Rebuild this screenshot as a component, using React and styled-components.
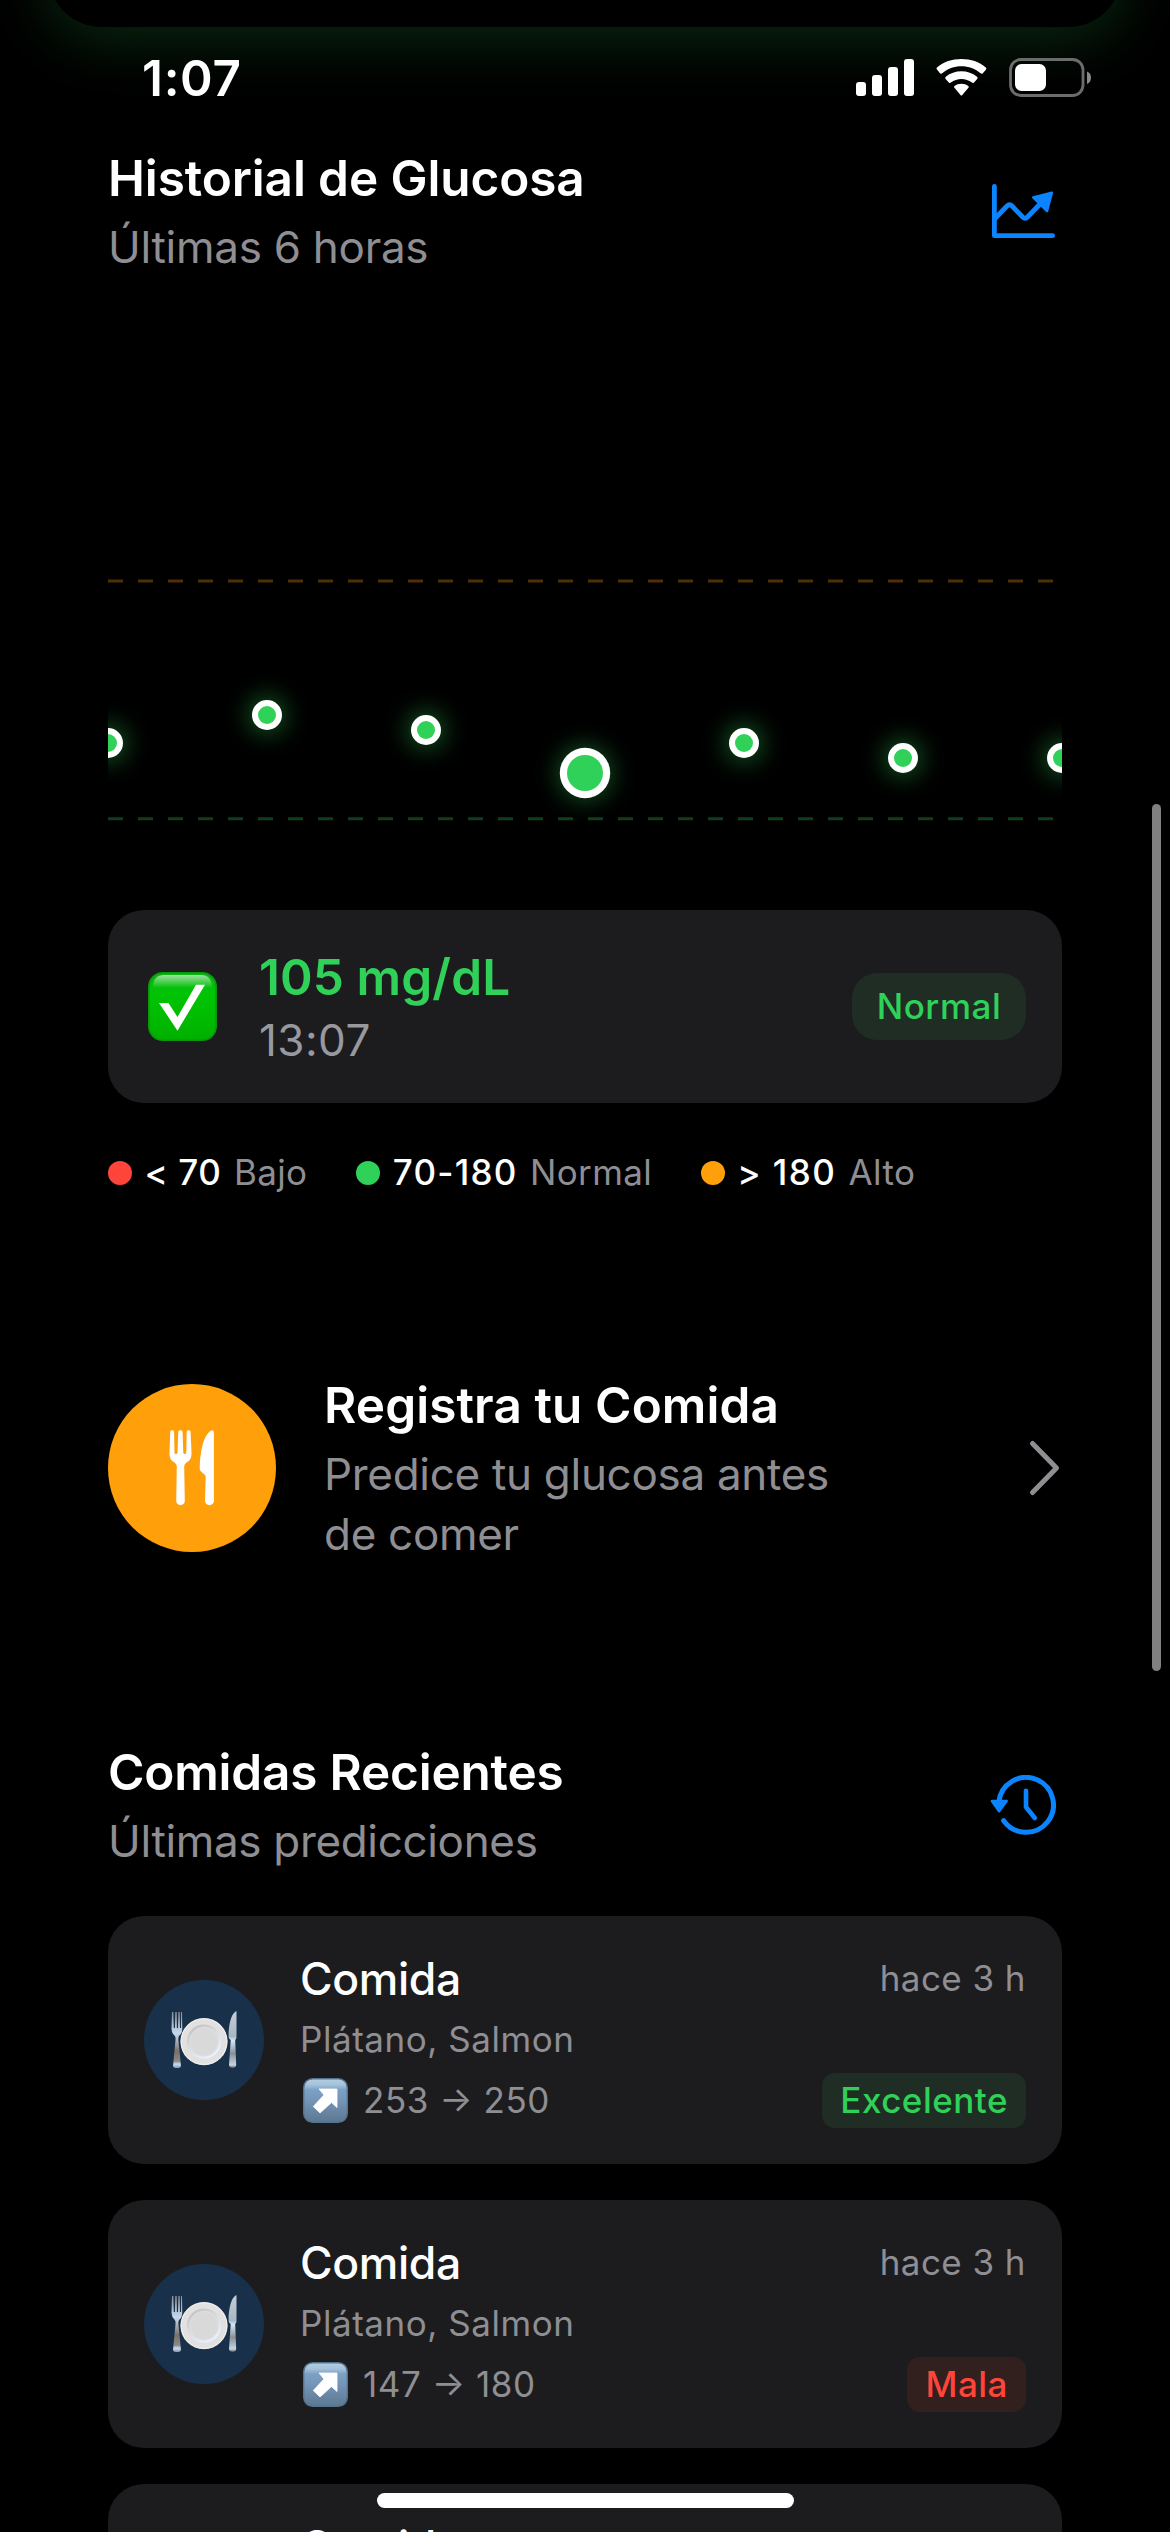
import React from "react";
import styled, { createGlobalStyle } from "styled-components";

const c = {
  label: "#ffffff",
  secondary: "#8e8e93",
  card: "#1c1c1e",
  green: "#30d158",
  orange: "#ff9f0a",
  red: "#ff453a",
  blue: "#0a84ff",
};

const GlobalStyle = createGlobalStyle`
  *, *::before, *::after { box-sizing: border-box; }
  body { margin: 0; background: #000; }
`;

const Page = styled.div`
  position: relative;
  width: 1170px;
  height: 2532px;
  overflow: hidden;
  background: #000;
  color: ${c.label};
  font-family: Inter, "Liberation Sans", sans-serif;
`;

const PreviousCard = styled.div`
  position: absolute;
  top: -200px;
  left: 48px;
  width: 1074px;
  height: 227px;
  border-radius: 54px;
  background: #000;
  box-shadow: 0 12px 60px rgba(48, 209, 88, 0.2);
`;

const StatusBar = styled.header`
  position: relative;
  display: flex;
  justify-content: space-between;
  align-items: flex-start;
  height: 145px;
  padding: 48px 78px 0 142px;
`;

const StatusIcons = styled.svg`
  display: block;
  width: 236px;
  height: 40px;
  margin-top: 9px;
`;

const Content = styled.main`
  display: flex;
  flex-direction: column;
  padding: 0 108px;
`;

const Section = styled.section`
  display: flex;
  flex-direction: column;
  margin-top: ${(p) => p.$top || 0}px;
`;

const SectionHeader = styled.div`
  display: flex;
  align-items: center;
  justify-content: space-between;
`;

const Stack = styled.div`
  display: flex;
  flex-direction: column;
  gap: ${(p) => p.$gap || 0}px;
  width: ${(p) => (p.$width ? `${p.$width}px` : "auto")};
`;

const Title = styled.div`
  font-size: 49.5px;
  font-weight: 600;
  line-height: ${(p) => p.$line || 66}px;
  letter-spacing: ${(p) => p.$ls || 0}px;
  color: ${(p) => p.$color || c.label};
  white-space: nowrap;
`;

const Subtitle = styled.div`
  font-size: 44px;
  line-height: 60px;
  letter-spacing: ${(p) => p.$ls ?? -0.33}px;
  color: ${(p) => p.$color || c.secondary};
`;

const Caption = styled.span`
  font-size: 35px;
  line-height: 48px;
  font-weight: ${(p) => p.$weight || 400};
  letter-spacing: ${(p) => p.$ls ?? 0.55}px;
  color: ${(p) => p.$color || c.secondary};
  white-space: nowrap;
`;

const Change = styled(Caption)`
  font-feature-settings: "case" 1;
`;

const Icon = styled.svg`
  display: block;
  flex: none;
  width: ${(p) => p.$w}px;
  height: ${(p) => p.$h}px;
  margin: ${(p) => p.$m || 0};
`;

const Chart = styled.svg`
  display: block;
  width: 954px;
  height: 573px;
  margin: 24px 0 36px;
`;

const ReadingCard = styled.div`
  display: flex;
  align-items: center;
  height: 193px;
  padding: 0 36px 0 40px;
  border-radius: 36px;
  background: ${c.card};
`;

const ReadingText = styled.div`
  display: flex;
  flex-direction: column;
  flex: 1;
  margin-left: 42px;
`;

const StatusPill = styled.div`
  display: flex;
  align-items: center;
  justify-content: center;
  width: 174px;
  height: 67px;
  padding-bottom: 2px;
  border-radius: 25px;
  background: #1f2d25;
`;

const Legend = styled.div`
  display: flex;
  gap: 49px;
  margin-top: 45px;
`;

const LegendItem = styled.div`
  display: flex;
  align-items: center;
  gap: 12.4px;
`;

const Dot = styled.span`
  width: 24px;
  height: 24px;
  margin-top: 2px;
  border-radius: 50%;
  background: ${(p) => p.$color};
`;

const ActionRow = styled.section`
  display: flex;
  align-items: center;
  gap: 48px;
  height: 192px;
  margin-top: 176px;
`;

const ActionIcon = styled.div`
  display: flex;
  align-items: center;
  justify-content: center;
  width: 168px;
  height: 168px;
  border-radius: 50%;
  background: ${c.orange};
`;

const MealList = styled.div`
  display: flex;
  flex-direction: column;
  gap: 36px;
  margin-top: 45px;
`;

const MealCard = styled.article`
  display: flex;
  align-items: center;
  gap: 36px;
  height: 248px;
  padding: 0 36px;
  border-radius: 36px;
  background: ${c.card};
`;

const MealAvatar = styled.div`
  width: 120px;
  height: 120px;
  border-radius: 50%;
  background: #18304a;
`;

const MealBody = styled.div`
  display: flex;
  flex-direction: column;
  flex: 1;
  height: 182px;
`;

const MealRow = styled.div`
  display: flex;
  align-items: center;
  justify-content: space-between;
  height: ${(p) => p.$h}px;
  margin-top: ${(p) => p.$top || 0}px;
`;

const MealName = styled.div`
  font-size: 44.5px;
  font-weight: 500;
  line-height: 60px;
  letter-spacing: -0.35px;
`;

const MealTime = styled(Caption)`
  padding-bottom: 2px;
`;

const Trend = styled.div`
  display: flex;
  align-items: center;
  gap: 15px;
  padding: 0 0 1px 3px;
`;

const RatingBadge = styled.div`
  display: flex;
  align-items: center;
  height: 55px;
  padding: 0 18px 1px;
  border-radius: 13px;
  background: ${(p) => p.$bg};
`;

const ScrollIndicator = styled.div`
  position: absolute;
  top: 804px;
  left: 1152px;
  width: 9px;
  height: 867px;
  border-radius: 5px;
  background: #808080;
`;

const HomeIndicator = styled.div`
  position: absolute;
  left: 377px;
  top: 2493px;
  width: 417px;
  height: 15px;
  border-radius: 8px;
  background: #fff;
`;

const readings = [
  { x: 0, y: 442 },
  { x: 159, y: 414 },
  { x: 318, y: 429 },
  { x: 477, y: 472, selected: true },
  { x: 636, y: 442 },
  { x: 795, y: 457 },
  { x: 954, y: 457 },
];

const ranges = [
  { color: c.red, value: "< 70", name: "Bajo", ls: 0.6 },
  { color: c.green, value: "70-180", name: "Normal", ls: 1.25 },
  { color: c.orange, value: "> 180", name: "Alto", ls: 1.4 },
];

const tones = {
  good: { bg: "#1f2d25", color: c.green },
  bad: { bg: "#32201f", color: c.red },
};

const meals = [
  { change: "253 → 250", rating: "Excelente", tone: "good" },
  { change: "147 → 180", rating: "Mala", tone: "bad" },
  { change: "147 → 180", rating: "Mala", tone: "bad" },
];

function StatusGlyphs() {
  return (
    <StatusIcons viewBox="0 0 236 40">
      <g fill="#fff">
        <rect x="0" y="25" width="10" height="14" rx="3" />
        <rect x="16" y="18" width="10" height="21" rx="3" />
        <rect x="32" y="10" width="10" height="29" rx="3" />
        <rect x="48" y="2" width="10" height="37" rx="3" />
        <path d="M81 12.6 Q79.8 11.6 81 10.5 C87.500 4.800 96 2 105.400 2 C114.800 2 123.300 4.800 129.800 10.500 Q131 11.600 129.900 12.700 L126.800 16.200 Q125.800 17.300 124.600 16.300 C119.300 11.700 112.600 9.300 105.400 9.300 C98.200 9.300 91.500 11.700 86.200 16.300 Q85 17.300 84 16.200 Z" />
        <path d="M89.600 21.900 Q88.600 20.800 89.800 19.800 C94.200 16.200 99.500 14.300 105.400 14.300 C111.300 14.300 116.600 16.200 121 19.800 Q122.200 20.800 121.200 21.900 L118 25.500 Q117.100 26.500 115.900 25.600 C112.800 23.200 109.300 22 105.400 22 C101.500 22 98 23.200 94.900 25.600 Q93.700 26.500 92.800 25.500 Z" />
        <path d="M98.400 30.800 Q97.400 29.800 98.500 28.900 C100.500 27.500 102.800 26.800 105.400 26.800 C108 26.800 110.300 27.500 112.300 28.900 Q113.400 29.800 112.400 30.800 L106.300 38 Q105.400 39 104.500 38 Z" />
        <rect x="159" y="7" width="31" height="27" rx="6.500" />
      </g>
      <rect x="154.500" y="2.500" width="72.500" height="36" rx="10.500" fill="none" stroke="#6c6c6c" strokeWidth="2.800" />
      <path d="M231 14.500 C233.500 15.500 235 17.700 235 20.700 C235 23.700 233.500 26 231 27 Z" fill="#8a8a8a" />
    </StatusIcons>
  );
}

function TrendChartIcon() {
  return (
    <Icon $w={66} $h={58} $m="0 5px 0 0" viewBox="0 0 66 58" fill="none" stroke={c.blue} strokeWidth="4.800" strokeLinecap="round" strokeLinejoin="round">
      <path d="M3.400 4.400 V53.700 H61.600" />
      <path d="M4.500 36 L16 24 Q18.600 21.500 21 24 L31.600 35 Q34 37.500 36.500 35 L51 20" />
      <path d="M60.800 10.800 L42.200 15.400 L56 29.200 Z" fill={c.blue} strokeWidth="2.500" />
    </Icon>
  );
}

function HistoryIcon() {
  return (
    <Icon $w={66} $h={60} $m="0 6px 0 0" viewBox="0 0 66 60" fill="none" stroke={c.blue} strokeWidth="5" strokeLinecap="round" strokeLinejoin="round">
      <path d="M8.800 27 A27.400 27.400 0 1 1 13.600 45.600" strokeLinecap="round" />
      <path d="M36 15.800 V32 L44.800 43" strokeWidth="4.600" />
      <path d="M1.900 26 H16.700 L9.100 36.300 Z" fill={c.blue} strokeWidth="2.500" />
    </Icon>
  );
}

function ForkKnifeIcon() {
  return (
    <Icon $w={46} $h={76} viewBox="0 0 46 76" fill="#fff">
      <path d="M1.200 2.200 C1.300 -0.300 5.100 -0.300 5.100 2.200 L5.500 22.500 Q5.600 24 7 24 Q8.400 24 8.500 22.500 L9.200 2.200 C9.300 -0.300 13.500 -0.300 13.600 2.200 L14.300 22.500 Q14.400 24 15.800 24 Q17.200 24 17.300 22.500 L17.700 2.200 C17.700 -0.300 21.500 -0.300 21.600 2.200 L22.500 22 C22.800 28 21 30.500 17.500 32.600 Q15.200 34 15.200 36.500 L15.800 71 C15.800 76.500 7.200 76.500 7.200 71 L7.800 36.500 Q7.800 34 5.500 32.600 C2 30.500 0.200 28 0.500 22 Z" />
      <path d="M41.500 0.800 Q44.800 -1.200 44.900 3 L44.900 71 C44.900 76.500 36 76.500 36 71 L36.700 47 Q36.700 45.500 35.500 44.500 L32 41.500 Q30.600 40.300 30.700 38 C31 21 34.500 6 41.500 0.800 Z" />
    </Icon>
  );
}

function CheckEmoji() {
  return (
    <Icon $w={69} $h={69} viewBox="0 0 69 69">
      <defs>
        <linearGradient id="checkFill" x1="0" y1="0" x2="0" y2="1">
          <stop offset="0" stopColor="#0bb512" />
          <stop offset="0.300" stopColor="#00c405" />
          <stop offset="0.600" stopColor="#00bd00" />
          <stop offset="1" stopColor="#00b000" />
        </linearGradient>
        <linearGradient id="checkShine" x1="0" y1="0" x2="0" y2="1">
          <stop offset="0" stopColor="#fff" stopOpacity="0.600" />
          <stop offset="1" stopColor="#fff" stopOpacity="0" />
        </linearGradient>
      </defs>
      <rect x="0.800" y="0.800" width="67.400" height="67.400" rx="14" fill="url(#checkFill)" stroke="#0a960d" strokeWidth="1.600" />
      <path d="M4.500 16 Q5.500 3 16 3 H53 Q63.500 3 64.500 16 Z" fill="url(#checkShine)" />
      <path d="M11 31 H20.500 L29.500 45 L48 12.700 H57 L29.500 58.700 Z" fill="#fff" />
    </Icon>
  );
}

function PlateEmoji() {
  return (
    <Icon $w={120} $h={120} viewBox="0 0 120 120">
      <defs>
        <linearGradient id="metal" x1="0" y1="0" x2="0" y2="1">
          <stop offset="0" stopColor="#8d8f95" />
          <stop offset="0.380" stopColor="#c3d9ef" />
          <stop offset="0.480" stopColor="#b6bec8" />
          <stop offset="0.700" stopColor="#77706c" />
          <stop offset="0.880" stopColor="#8e8986" />
          <stop offset="0.930" stopColor="#c9ddf5" />
          <stop offset="1" stopColor="#8d99a8" />
        </linearGradient>
        <linearGradient id="blade" x1="0" y1="0" x2="0" y2="1">
          <stop offset="0" stopColor="#c4ced8" />
          <stop offset="0.450" stopColor="#a9b7c3" />
          <stop offset="0.520" stopColor="#d3e7f8" />
          <stop offset="0.750" stopColor="#8b9096" />
          <stop offset="0.950" stopColor="#c3d4e4" />
          <stop offset="1" stopColor="#7c7571" />
        </linearGradient>
        <linearGradient id="well" x1="0" y1="0" x2="0.600" y2="1">
          <stop offset="0" stopColor="#bdbdbf" />
          <stop offset="0.500" stopColor="#d8dadd" />
          <stop offset="1" stopColor="#e6f0fd" />
        </linearGradient>
      </defs>
      <path d="M28 32 H29.300 L29.800 48 H30.900 L31.300 32 H32.700 L32.900 48 H34 L34.400 32 H35.700 L36 48 H37 L37 32 H38 L38.300 49 Q38 54 35 56 Q34.200 57 34.400 60 L37 86 Q36.600 88 33 88 Q29.300 88 29 86 L31.500 60 Q31.800 57 30.800 56 Q27.600 53 27.500 49 Z" fill="url(#metal)" />
      <path d="M92.500 31 Q86 34 84.600 52 V57 Q84.800 59 86.700 60 L85 85 Q85.300 87.700 88.700 87.700 Q92 87.700 92.200 85 L91.200 60 Q92.500 59 92.500 57 Z" fill="url(#blade)" />
      <circle cx="60" cy="61.600" r="23.600" fill="#e2e1e0" />
      <circle cx="60" cy="61.600" r="22.800" fill="none" stroke="#f1f1f1" strokeWidth="1" />
      <circle cx="60" cy="61.600" r="16" fill="#dcdcdc" stroke="url(#well)" strokeWidth="2.400" />
      <circle cx="60" cy="61.600" r="13" fill="#d9d9d9" />
    </Icon>
  );
}

function ArrowEmoji() {
  return (
    <Icon $w={45} $h={45} viewBox="0 0 45 45">
      <defs>
        <linearGradient id="arrowFill" x1="0" y1="0" x2="0" y2="1">
          <stop offset="0" stopColor="#b4cfe4" />
          <stop offset="0.140" stopColor="#a5c2da" />
          <stop offset="0.260" stopColor="#7ba0c6" />
          <stop offset="0.500" stopColor="#7595b8" />
          <stop offset="1" stopColor="#5c7890" />
        </linearGradient>
      </defs>
      <rect x="0.700" y="0.700" width="43.600" height="43.600" rx="9" fill="url(#arrowFill)" stroke="#55748f" strokeWidth="1.400" />
      <path d="M16 11 H34 V29.500 L28.500 24.500 L17 35 L10.300 28.500 L21 17 Z" fill="#fff" stroke="#fff" strokeWidth="0.800" strokeLinejoin="round" />
    </Icon>
  );
}

function GlucoseChart() {
  return (
    <Chart viewBox="0 0 954 573">
      <defs>
        <filter id="glow" x="-200%" y="-200%" width="500%" height="500%">
          <feGaussianBlur stdDeviation="12" />
        </filter>
      </defs>
      <path d="M0 280 H954" stroke="#4d3003" strokeWidth="3" strokeDasharray="15 15" />
      <path d="M0 517.700 H954" stroke="#0e3f1a" strokeWidth="3" strokeDasharray="15 15" />
      {readings.map((p) => (
        <g key={p.x}>
          <circle cx={p.x} cy={p.y} r={p.selected ? 27 : 19} fill={c.green} opacity="0.400" filter="url(#glow)" />
          <circle cx={p.x} cy={p.y} r={p.selected ? 25.200 : 15} fill="#fff" />
          <circle cx={p.x} cy={p.y} r={p.selected ? 18 : 9} fill={c.green} />
        </g>
      ))}
    </Chart>
  );
}

function Meal({ meal }) {
  const tone = tones[meal.tone];
  return (
    <MealCard>
      <MealAvatar>
        <PlateEmoji />
      </MealAvatar>
      <MealBody>
        <MealRow $h={60}>
          <MealName>Comida</MealName>
          <MealTime $ls={0.45}>hace 3 h</MealTime>
        </MealRow>
        <MealRow $h={48} $top={6}>
          <Caption $ls={0.55}>Plátano, Salmon</Caption>
        </MealRow>
        <MealRow $h={55} $top={10}>
          <Trend>
            <ArrowEmoji />
            <Change $ls={0.55}>{meal.change}</Change>
          </Trend>
          <RatingBadge $bg={tone.bg}>
            <Caption $weight={500} $color={tone.color} $ls={0.5}>
              {meal.rating}
            </Caption>
          </RatingBadge>
        </MealRow>
      </MealBody>
    </MealCard>
  );
}

export default function App() {
  return (
    <Page>
      <GlobalStyle />
      <PreviousCard />
      <StatusBar>
        <Title $line={60} $ls={0.7}>1:07</Title>
        <StatusGlyphs />
      </StatusBar>
      <Content>
        <Section>
          <SectionHeader>
            <Stack $gap={6}>
              <Title $ls={-0.1}>Historial de Glucosa</Title>
              <Subtitle $ls={-0.28}>Últimas 6 horas</Subtitle>
            </Stack>
            <TrendChartIcon />
          </SectionHeader>
          <GlucoseChart />
          <ReadingCard>
            <CheckEmoji />
            <ReadingText>
              <Title $color={c.green} $ls={0.1}>105 mg/dL</Title>
              <Subtitle $ls={0.45} $color="#98989f">13:07</Subtitle>
            </ReadingText>
            <StatusPill>
              <Caption $weight={500} $color={c.green}>Normal</Caption>
            </StatusPill>
          </ReadingCard>
          <Legend>
            {ranges.map((r) => (
              <LegendItem key={r.name}>
                <Dot $color={r.color} />
                <Caption $weight={500} $color={c.label} $ls={r.ls}>{r.value}</Caption>
                <Caption $ls={0.35}>{r.name}</Caption>
              </LegendItem>
            ))}
          </Legend>
        </Section>

        <ActionRow>
          <ActionIcon>
            <ForkKnifeIcon />
          </ActionIcon>
          <Stack $gap={6} $width={670}>
            <Title $ls={0.1}>Registra tu Comida</Title>
            <Stack $width={540}>
              <Subtitle $ls={-0.3}>Predice tu glucosa antes de comer</Subtitle>
            </Stack>
          </Stack>
          <Icon $w={34} $h={58} $m="0 0 0 -15px" viewBox="0 0 34 58" fill="none" stroke={c.secondary} strokeWidth="5" strokeLinecap="round" strokeLinejoin="round">
            <path d="M5.500 4.500 L29.500 29 L5.500 53.500" />
          </Icon>
        </ActionRow>

        <Section $top={175}>
          <SectionHeader>
            <Stack $gap={6}>
              <Title $ls={-0.2}>Comidas Recientes</Title>
              <Subtitle>Últimas predicciones</Subtitle>
            </Stack>
            <HistoryIcon />
          </SectionHeader>
          <MealList>
            {meals.map((meal, i) => (
              <Meal key={i} meal={meal} />
            ))}
          </MealList>
        </Section>
      </Content>
      <ScrollIndicator />
      <HomeIndicator />
    </Page>
  );
}
